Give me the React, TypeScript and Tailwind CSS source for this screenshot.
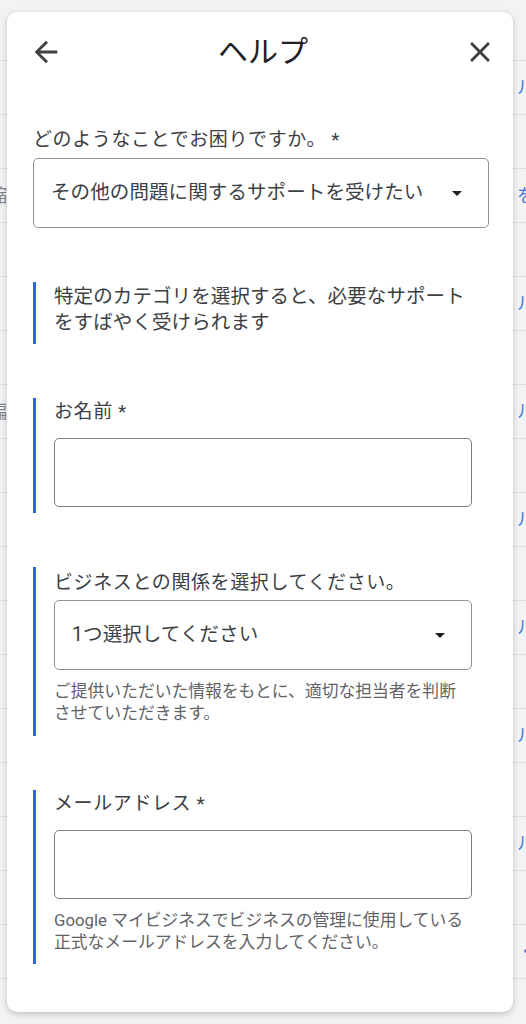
import React from "react";

const font = "font-['Roboto','Noto_Sans_CJK_JP',sans-serif]";

// rows of the page that sits behind the help panel
const bgRows: { left?: string; right?: string }[] = [
    {},
    { right: "ルール" },
    {},
    { left: "縮小", right: "を表示" },
    {},
    { right: "ルール" },
    {},
    { left: "編集", right: "ルール" },
    {},
    { right: "ルール" },
    {},
    { right: "ルール" },
    {},
    { right: "ルール" },
    {},
    { right: "ルール" },
    {},
    { right: "・管理" },
    {},
];

function ArrowBack() {
    return (
        <svg width="34" height="34" viewBox="0 0 24 24" fill="#3c4043">
            <path d="M20 11H7.83l5.59-5.59L12 4l-8 8 8 8 1.41-1.41L7.83 13H20v-2z" />
        </svg>
    );
}

function CloseIcon() {
    return (
        <svg width="34" height="34" viewBox="0 0 24 24" fill="#3c4043">
            <path d="M19 6.41L17.59 5 12 10.59 6.41 5 5 6.41 10.59 12 5 17.59 6.41 19 12 13.41 17.59 19 19 17.59 13.41 12z" />
        </svg>
    );
}

function DropArrow() {
    return (
        <svg width="24" height="24" viewBox="0 0 24 24" fill="#202124">
            <path d="M7 10l5 5 5-5z" />
        </svg>
    );
}

function Select({ value, width }: { value: string; width: string }) {
    return (
        <div
            className={`flex h-[70px] ${width} items-center justify-between rounded-[5px] border border-[#8f9398] pl-[17px] pr-[19px]`}
        >
            <span className="text-[19.5px] leading-[28px] tracking-[0.1px] text-[#3c4043]">{value}</span>
            <DropArrow />
        </div>
    );
}

function Input() {
    return <div className="h-[69px] w-[418px] rounded-[5px] border border-[#7a7e83]" />;
}

function Block({ children, className = "" }: { children: React.ReactNode; className?: string }) {
    return (
        <div className={`ml-[26px] border-l-[3px] border-[#3367d6] pl-[18px] ${className}`}>
            {children}
        </div>
    );
}

export default function App() {
    return (
        <div className={`relative h-[1024px] overflow-hidden bg-[#f3f3f3] ${font}`}>
            <div className="pt-[7px]">
                {bgRows.map((r, i) => (
                    <div key={i} className="flex h-[54px] items-center border-b border-[#dedfe1]">
                        <div className="w-[8px] overflow-hidden">
                            {r.left && (
                                <span className="ml-[-11px] block whitespace-nowrap text-[18px] text-[#80868b]">
                                    {r.left}
                                </span>
                            )}
                        </div>
                        <div className="ml-auto w-[9px] overflow-hidden">
                            {r.right && (
                                <span className="block whitespace-nowrap text-[18px] text-[#4a78d6]">
                                    {r.right}
                                </span>
                            )}
                        </div>
                    </div>
                ))}
            </div>

            <div className="absolute left-[7px] top-[12px] h-[1000px] w-[506px] rounded-[10px] bg-white shadow-[0_2px_6px_rgba(0,0,0,0.22)]">
                <div className="flex h-[80px] items-center pl-[22px] pr-[16px]">
                    <ArrowBack />
                    <div className="flex-1 text-center text-[30px] leading-[36px] text-[#202124]">ヘルプ</div>
                    <CloseIcon />
                </div>

                <div className="ml-[26px] mt-[34px]">
                    <div className="mb-[4px] text-[19px] leading-[28px] tracking-[0.6px] text-[#3c4043]">
                        どのようなことでお困りですか。 *
                    </div>
                    <Select value="その他の問題に関するサポートを受けたい" width="w-[456px]" />
                </div>

                <Block className="mt-[54px] h-[62px] pt-[2px]">
                    <p className="text-[19.5px] leading-[26px] tracking-[0.1px] text-[#3c4043]">
                        特定のカテゴリを選択すると、必要なサポート
                        <br />
                        をすばやく受けられます
                    </p>
                </Block>

                <Block className="mt-[54px] pb-[6px]">
                    <div className="text-[19px] leading-[28px] tracking-[0.6px] text-[#3c4043]">お名前 *</div>
                    <div className="mt-[12px]">
                        <Input />
                    </div>
                </Block>

                <Block className="mt-[54px] pb-[12px] pt-[2px]">
                    <div className="text-[19px] leading-[28px] tracking-[0.6px] text-[#3c4043]">
                        ビジネスとの関係を選択してください。
                    </div>
                    <div className="mt-[3px]">
                        <Select value="1つ選択してください" width="w-[418px]" />
                    </div>
                    <p className="mt-[10px] text-[16.8px] leading-[22px] text-[#5f6368]">
                        ご提供いただいた情報をもとに、適切な担当者を判断
                        <br />
                        させていただきます。
                    </p>
                </Block>

                <Block className="mt-[54px] pb-[11px]">
                    <div className="text-[19px] leading-[28px] tracking-[0.6px] text-[#3c4043]">メールアドレス *</div>
                    <div className="mt-[12px]">
                        <Input />
                    </div>
                    <p className="mt-[10px] text-[16.8px] leading-[22px] text-[#5f6368]">
                        Google マイビジネスでビジネスの管理に使用している
                        <br />
                        正式なメールアドレスを入力してください。
                    </p>
                </Block>
            </div>
        </div>
    );
}
